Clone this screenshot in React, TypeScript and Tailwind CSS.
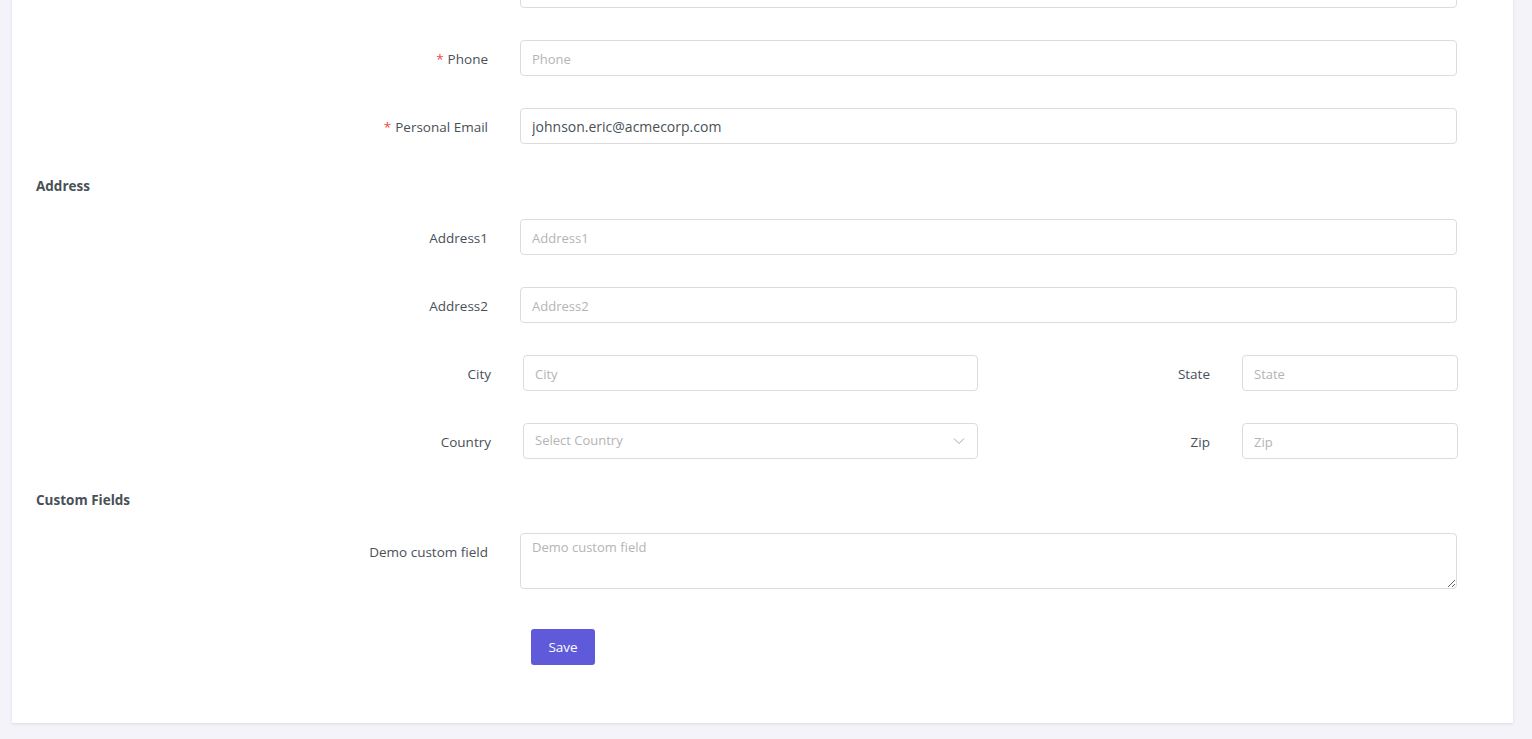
import React from "react";

const font = { fontFamily: "'Open Sans', Lato, sans-serif" };

function Label({ text, required, w = "w-[484px]" }: { text: string; required?: boolean; w?: string }) {
  return (
    <div className={`${w} shrink-0 h-9 flex items-center justify-end pr-[32px] pt-[3px] text-[13.5px] font-medium text-[#495057]`}>
      {required && <span className="text-[#f04848] mr-[4px]">*</span>}
      <span>{text}</span>
    </div>
  );
}

function Input({ placeholder, value, w = "w-[937px]" }: { placeholder?: string; value?: string; w?: string }) {
  return (
    <input
      readOnly
      defaultValue={value}
      placeholder={placeholder}
      style={font}
      className={`${w} h-9 shrink-0 rounded-[4px] border border-[#dcdcdc] bg-white px-[11px] text-[14px] text-[#495057] placeholder:text-[13px] placeholder:text-[#b4b4b4] outline-none`}
    />
  );
}

function Heading({ text }: { text: string }) {
  return <div className="h-5 leading-5 text-[13.5px] font-bold text-[#495057]">{text}</div>;
}

export default function App() {
  return (
    <div style={font} className="w-[1532px] h-[739px] overflow-hidden bg-[#f3f3f9]">
      <div className="ml-[12px] w-[1501px] mt-[-39px] bg-white shadow-[0_1px_3px_rgba(56,65,74,0.12)] pl-[24px] pt-[11px] pb-[58px]">
        <div className="flex">
          <Label text="Email" required />
          <Input placeholder="" />
        </div>
        <div className="flex mt-[32px]">
          <Label text="Phone" required />
          <Input placeholder="Phone" />
        </div>
        <div className="flex mt-[32px]">
          <Label text="Personal Email" required />
          <Input value="johnson.eric@acmecorp.com" />
        </div>

        <div className="mt-[32px] mb-[23px]">
          <Heading text="Address" />
        </div>

        <div className="flex">
          <Label text="Address1" />
          <Input placeholder="Address1" />
        </div>
        <div className="flex mt-[32px]">
          <Label text="Address2" />
          <Input placeholder="Address2" />
        </div>
        <div className="flex mt-[32px]">
          <Label text="City" w="w-[487px]" />
          <Input placeholder="City" w="w-[455px]" />
          <Label text="State" w="w-[264px]" />
          <Input placeholder="State" w="w-[216px]" />
        </div>
        <div className="flex mt-[32px]">
          <Label text="Country" w="w-[487px]" />
          <div className="relative w-[455px] h-9 shrink-0 rounded-[4px] border border-[#dcdcdc] bg-white px-[11px] flex items-center text-[13px] text-[#b4b4b4]">
            <span>Select Country</span>
            <svg className="absolute right-[12px] top-[13px]" width="12" height="8" viewBox="0 0 12 8" fill="none">
              <path d="M1 1.5 L6 6.5 L11 1.5" stroke="#a8a8a8" strokeWidth="1" />
            </svg>
          </div>
          <Label text="Zip" w="w-[264px]" />
          <Input placeholder="Zip" w="w-[216px]" />
        </div>

        <div className="mt-[31px] mb-[23px]">
          <Heading text="Custom Fields" />
        </div>

        <div className="flex">
          <Label text="Demo custom field" />
          <textarea
            readOnly
            placeholder="Demo custom field"
            style={font}
            className="w-[937px] h-[56px] shrink-0 rounded-[4px] border border-[#dcdcdc] bg-white px-[11px] py-[4px] text-[13px] text-[#495057] placeholder:text-[#b4b4b4] outline-none resize-y"
          />
        </div>

        <div className="flex mt-[40px]">
          <div className="w-[495px] shrink-0" />
          <button className="w-[64px] h-9 rounded-[3px] bg-[#5e5ad9] text-white text-[13.5px] font-medium">Save</button>
        </div>
      </div>
    </div>
  );
}
